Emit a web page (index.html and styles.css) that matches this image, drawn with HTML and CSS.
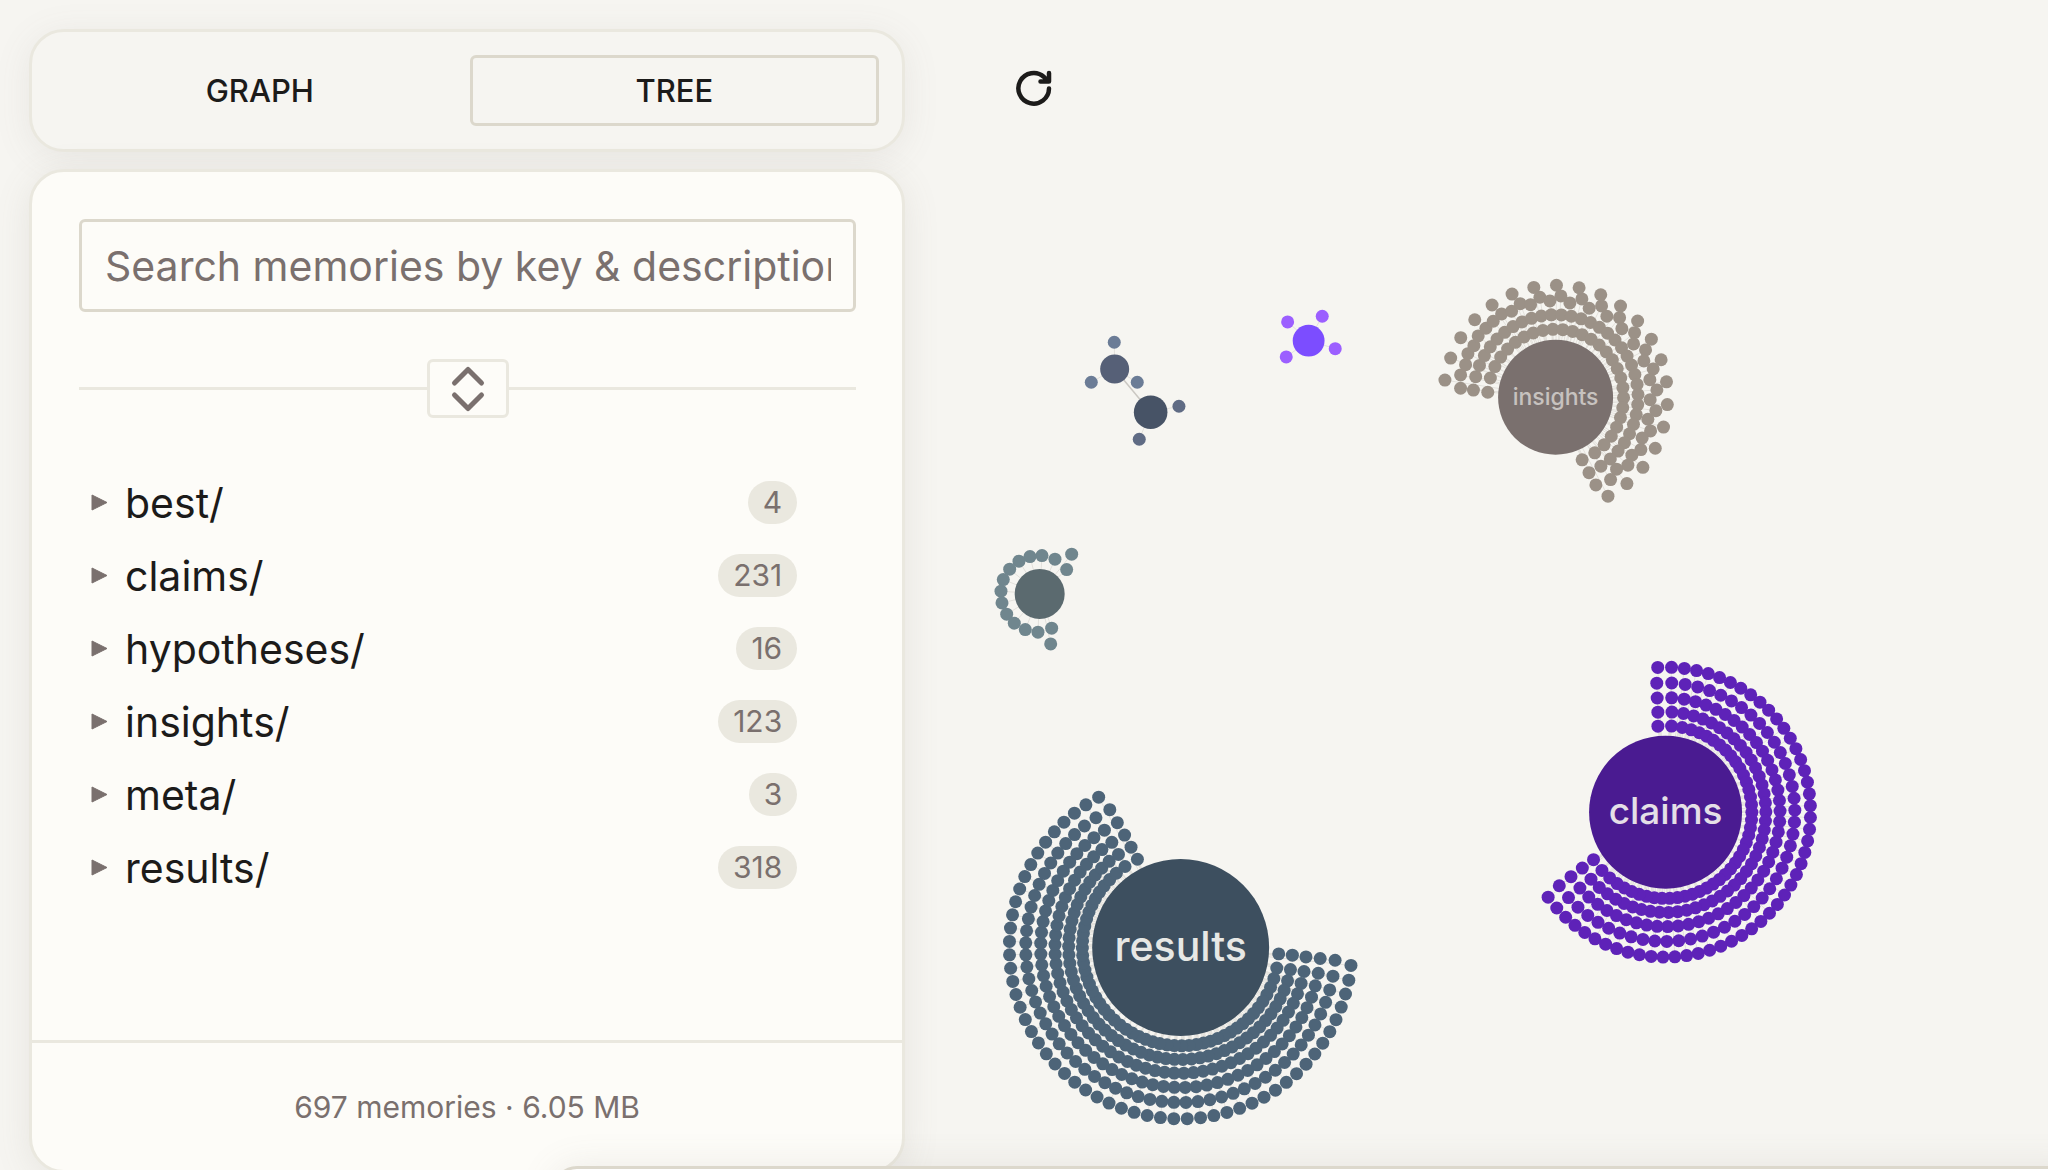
FILE: index.html
```
<!DOCTYPE html>
<html lang="en">

<head>
    <meta charset="UTF-8">
    <meta name="viewport" content="width=device-width, initial-scale=1.0">
    <title>Memories</title>
    <link rel="stylesheet" href="styles.css">
</head>

<body>
    <!-- Sidebar -->
    <aside class="sidebar">
        <nav class="tabs">
            <button class="tab" type="button">GRAPH</button>
            <button class="tab active" type="button">TREE</button>
        </nav>

        <section class="panel">
            <div class="panel-body">
                <input class="search" type="text" placeholder="Search memories by key &amp; description" aria-label="Search memories">

                <div class="divider">
                    <button class="expand-btn" type="button" aria-label="Expand all">
                        <svg width="36" height="48" viewBox="0 0 36 48">
                            <path d="M4.500 18 L18 4.500 L31.500 18 M4.500 30 L18 43.500 L31.500 30" />
                        </svg>
                    </button>
                </div>

                <ul class="tree" id="tree"></ul>
            </div>

            <footer class="panel-footer">697 memories · 6.05 MB</footer>
        </section>
    </aside>

    <!-- Graph -->
    <main class="canvas">
        <svg class="graph" id="graph" viewBox="905 0 1143 1170" preserveAspectRatio="xMinYMin meet"></svg>
        <button class="reload-btn" type="button" aria-label="Reload">
            <svg width="40" height="40" viewBox="0 0 40 40">
                <path d="M35 20.500 A15.300 15.300 0 1 1 30 9 L34 13 M35 5 V13.500 H26.500" />
            </svg>
        </button>
    </main>

    <div class="sheet"></div>

    <script src="script.js"></script>
</body>

</html>
```
FILE: styles.css
```
* {
    box-sizing: border-box;
}

body {
    display: flex;
    height: 100vh;
    margin: 0;
    overflow: hidden;
    background-color: #f6f5f1;
    color: #1c1b1a;
    font-family: Inter, "Liberation Sans", sans-serif;
}

button,
input {
    font-family: inherit;
    color: inherit;
}

button {
    background: none;
    border: none;
    padding: 0;
    cursor: pointer;
}

/* Sidebar */
.sidebar {
    display: flex;
    flex-direction: column;
    gap: 17px;
    width: 44.2%;
    padding: 29px 0 0 29px;
}

.tabs {
    display: flex;
    gap: 5px;
    padding: 23px;
    background-color: #f6f5f1;
    border: 3px solid #eae8df;
    border-radius: 35px;
    box-shadow: 0 6px 36px rgba(122, 112, 110, 0.1);
}

.tab {
    flex: 1;
    height: 71px;
    border: 3px solid transparent;
    border-radius: 6px;
    font-size: 31px;
    font-weight: 500;
}

.tab.active {
    border-color: #dcd8cc;
}

.panel {
    display: flex;
    flex-direction: column;
    flex-shrink: 0;
    min-height: calc(100vh - 166px);
    background-color: #fdfcf8;
    border: 3px solid #eae8df;
    border-radius: 35px;
    box-shadow: 0 6px 36px rgba(122, 112, 110, 0.12);
}

.panel-body {
    flex: 1;
    padding: 47px 46px 47px 47px;
}

.search {
    display: block;
    width: 100%;
    height: 93px;
    padding: 0 22px 0 23px;
    background: transparent;
    border: 3px solid #dcd8cc;
    border-radius: 6px;
    font-size: 41px;
}

.search::placeholder {
    color: #7a706e;
    opacity: 1;
}

.divider {
    display: flex;
    align-items: center;
    margin: 47px 0 48px;
}

.divider::before,
.divider::after {
    content: "";
    flex: 1;
    height: 3px;
    background-color: #eae8df;
}

.expand-btn {
    display: flex;
    align-items: center;
    justify-content: center;
    width: 82px;
    height: 59px;
    border: 3px solid #eae8df;
    border-radius: 6px;
}

.expand-btn path {
    fill: none;
    stroke: #7a706e;
    stroke-width: 5;
    stroke-linecap: round;
    stroke-linejoin: round;
}

/* Folder list */
.tree {
    list-style: none;
    margin: 0;
    padding: 0 59px 0 12px;
}

.folder {
    display: flex;
    align-items: center;
    gap: 17px;
    width: 100%;
    height: 73px;
    font-size: 41px;
}

.folder svg {
    fill: #7a706e;
    stroke: #7a706e;
    stroke-linejoin: round;
}

.count {
    margin-left: auto;
    padding: 0 15px;
    background-color: #eae8df;
    border-radius: 22px;
    color: #7a706e;
    font-size: 30px;
    line-height: 43px;
}

.panel-footer {
    padding: 46px 45px 44px;
    border-top: 3px solid #eae8df;
    color: #7a706e;
    font-size: 30px;
    line-height: 37px;
    text-align: center;
}

/* Graph */
.canvas {
    position: relative;
    flex: 1;
}

.graph {
    display: block;
    width: 100%;
    height: 100%;
}

.graph line {
    stroke: #e3e1dc;
    stroke-width: 1;
}

.graph .bridge {
    stroke: #cbc8c3;
    stroke-width: 1.5;
}

.graph text {
    fill: #f6f5f1;
    font-weight: 500;
    text-anchor: middle;
}

.reload-btn {
    position: absolute;
    top: 60px;
    left: 101px;
    display: flex;
    align-items: center;
    justify-content: center;
    width: 56px;
    height: 56px;
}

.reload-btn path {
    fill: none;
    stroke: #1c1b1a;
    stroke-width: 4.5;
    stroke-linecap: round;
    stroke-linejoin: round;
}

/* Bottom sheet, only its top edge is in view */
.sheet {
    position: fixed;
    top: calc(100vh - 4px);
    left: 27%;
    right: -40px;
    height: 200px;
    background-color: #fff;
    border: 3px solid #dcd8cc;
    border-radius: 24px;
    box-shadow: 0 0 36px rgba(122, 112, 110, 0.12);
}
```
FILE: script.js
```
const folders = [
    { name: 'best/', count: 4 },
    { name: 'claims/', count: 231 },
    { name: 'hypotheses/', count: 16 },
    { name: 'insights/', count: 123 },
    { name: 'meta/', count: 3 },
    { name: 'results/', count: 318 }
];

const tree = document.getElementById('tree');
folders.forEach(folder => {
    const item = document.createElement('li');
    item.innerHTML = `
        <button class="folder" type="button">
            <svg width="17" height="17" viewBox="0 0 17 17"><path d="M1 1 L16 8.500 L1 16 Z" /></svg>
            <span>${folder.name}</span>
            <span class="count">${folder.count}</span>
        </button>
    `;
    tree.appendChild(item);
});

// rings: [radius, start angle, end angle, dots, extra gap at the ends]
// dots: [x, y]
const clusters = [
    {
        x: 1114.7, y: 369, r: 14.5, hub: '#566077', dot: '#6b7c96',
        dots: [[1114.3, 342.3], [1091.3, 382.3], [1137.3, 382.3]]
    },
    {
        x: 1150.7, y: 412.3, r: 16.8, hub: '#475366', dot: '#5f6b84',
        dots: [[1179, 406.3], [1139.3, 439.3]]
    },
    {
        x: 1308.7, y: 340.7, r: 15.9, hub: '#7c4dff', dot: '#9c5fff',
        dots: [[1287.7, 322], [1322.3, 316.3], [1335.3, 348.7], [1286.3, 357]]
    },
    {
        x: 1039.7, y: 594, r: 25, hub: '#5b6a6f', dot: '#70868e',
        dots: [
            [1071.7, 554.3], [1066.7, 569.7], [1055, 559.3], [1042, 555.7],
            [1030, 556.7], [1019, 561.3], [1009.7, 569.3], [1003.3, 579.7],
            [1001, 591.3], [1002, 603], [1006.7, 614.3], [1014.3, 623.3],
            [1025.3, 629.7], [1038, 632.3], [1051.7, 628.3], [1050.7, 644]
        ]
    },
    {
        x: 1555.7, y: 397.3, r: 57.5, hub: '#7a706e', dot: '#9b9187',
        label: 'insights', size: 23, opacity: 0.62,
        rings: [
            [68, 184.2, 427, 28, 4.5],
            [82.5, 185, 426.1, 34, 3.5],
            [112, 188.8, 422.1, 21, 0]
        ],
        dots: [
            [1460.7, 388.3], [1460.7, 375], [1465.7, 364.7], [1468, 353.7],
            [1474, 345.7], [1478.3, 336], [1486, 328.3], [1493.3, 321.3],
            [1501.7, 314], [1511.7, 311.3], [1520.3, 303.7], [1530.7, 304.7],
            [1540, 297.3], [1550, 301], [1561, 296], [1570, 303],
            [1582, 299], [1589.3, 308.3], [1601.7, 306], [1607, 316.3],
            [1619.7, 317.7], [1622, 328.7], [1634.7, 332.7], [1633.7, 344],
            [1645.7, 350], [1644, 361], [1653.3, 369], [1650, 379.7],
            [1657, 390], [1650.3, 399.7], [1656, 410.7], [1648, 419.3],
            [1650.7, 431], [1642.3, 438], [1641, 449.7], [1632, 455.3],
            [1628, 465.3], [1616.7, 469.3], [1610.7, 479.7], [1596, 485]
        ]
    },
    {
        x: 1665.7, y: 812.3, r: 76.5, hub: '#4a1b91', dot: '#5e22b8',
        label: 'claims', size: 37, opacity: 0.9,
        rings: [
            [86.3, -95.1, 146.6, 45, 6],
            [100.3, -94.4, 146.1, 45, 5],
            [114.5, -94.2, 145.7, 45, 4],
            [129.3, -93.9, 145.3, 45, 3],
            [145, -93.1, 144.1, 51, 2]
        ]
    },
    {
        x: 1180.7, y: 947.7, r: 88.5, hub: '#3d4f5f', dot: '#4d6478',
        label: 'results', size: 41, opacity: 0.92,
        rings: [
            [98.3, 3.7, 243.9, 53, 7],
            [112, 3.9, 243.7, 53, 6],
            [125.7, 4.3, 243.5, 53, 5],
            [140, 4.5, 243.1, 53, 4],
            [155, 4.7, 242.8, 53, 4],
            [171.3, 6, 241.4, 53, 1.5]
        ]
    }
];

// Spreads the dots over an arc; gaps widen towards both ends
function ringDots(cx, cy, [r, from, to, count, extra]) {
    const arc = (to - from) * Math.PI / 180 * r;
    const widen = [];
    for (let i = 0; i < count - 1; i++) {
        const edge = Math.min(i, count - 2 - i);
        widen.push(extra * Math.exp(-edge / 1.5));
    }
    const base = (arc - widen.reduce((a, b) => a + b, 0)) / (count - 1);

    const dots = [];
    let travelled = 0;
    for (let i = 0; i < count; i++) {
        const angle = from * Math.PI / 180 + travelled / r;
        dots.push([cx + r * Math.cos(angle), cy + r * Math.sin(angle)]);
        travelled += base + (widen[i] || 0);
    }
    return dots;
}

let links = '<line class="bridge" x1="1114.7" y1="369" x2="1150.7" y2="412.3" />';
let nodes = '';
clusters.forEach(c => {
    let dots = c.dots || [];
    (c.rings || []).forEach(ring => {
        dots = dots.concat(ringDots(c.x, c.y, ring));
    });
    dots.forEach(([x, y]) => {
        links += `<line x1="${c.x}" y1="${c.y}" x2="${x}" y2="${y}" />`;
        nodes += `<circle cx="${x}" cy="${y}" r="6.5" fill="${c.dot}" />`;
    });
    nodes += `<circle cx="${c.x}" cy="${c.y}" r="${c.r}" fill="${c.hub}" />`;
    if (c.label) {
        nodes += `<text x="${c.x}" y="${c.y + c.size / 3}" font-size="${c.size}" opacity="${c.opacity}">${c.label}</text>`;
    }
});
document.getElementById('graph').innerHTML = links + nodes;
```
